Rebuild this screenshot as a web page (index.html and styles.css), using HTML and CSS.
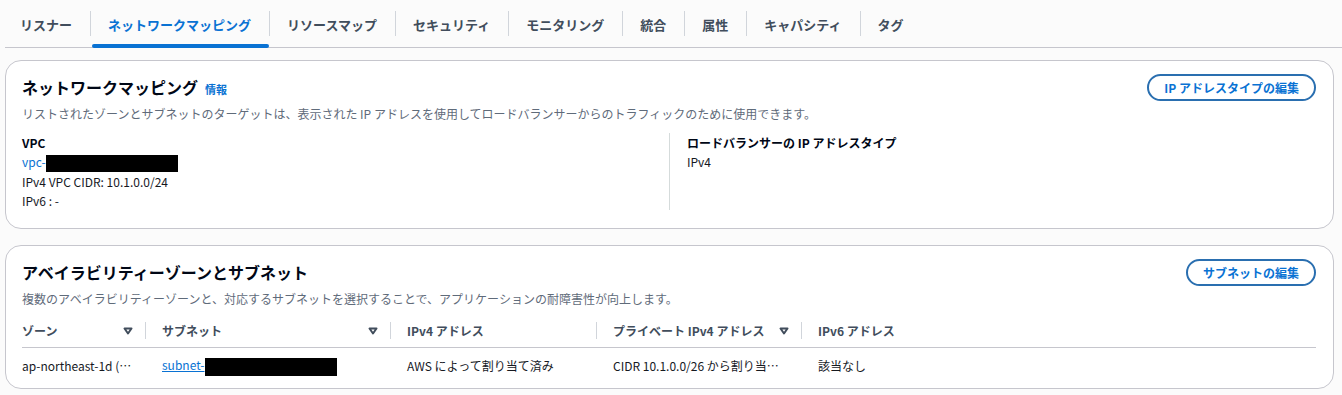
FILE: index.html
```html
<!DOCTYPE html>
<html lang="ja">
<head>
  <meta charset="utf-8">
  <title>ネットワークマッピング</title>
  <link rel="stylesheet" href="styles.css">
</head>
<body>
  <div class="page">
    <nav class="tabs">
      <a class="tab">リスナー</a>
      <span class="tab-sep"></span>
      <a class="tab active">ネットワークマッピング</a>
      <span class="tab-sep"></span>
      <a class="tab">リソースマップ</a>
      <span class="tab-sep"></span>
      <a class="tab">セキュリティ</a>
      <span class="tab-sep"></span>
      <a class="tab">モニタリング</a>
      <span class="tab-sep"></span>
      <a class="tab">統合</a>
      <span class="tab-sep"></span>
      <a class="tab">属性</a>
      <span class="tab-sep"></span>
      <a class="tab">キャパシティ</a>
      <span class="tab-sep"></span>
      <a class="tab">タグ</a>
    </nav>

    <section class="card">
      <div class="card-header">
        <div class="card-title">
          <h2>ネットワークマッピング</h2>
          <a class="info">情報</a>
        </div>
        <button class="btn">IP アドレスタイプの編集</button>
      </div>
      <p class="card-desc">リストされたゾーンとサブネットのターゲットは、表示された IP アドレスを使用してロードバランサーからのトラフィックのために使用できます。</p>
      <div class="columns">
        <div class="col">
          <div class="kv-label">VPC</div>
          <div><a class="link">vpc-</a><span class="redact redact-vpc"></span></div>
          <div>IPv4 VPC CIDR: 10.1.0.0/24</div>
          <div>IPv6 : -</div>
        </div>
        <div class="col">
          <div class="kv-label">ロードバランサーの IP アドレスタイプ</div>
          <div>IPv4</div>
        </div>
      </div>
    </section>

    <section class="card card-table">
      <div class="card-header">
        <div class="card-title">
          <h2>アベイラビリティーゾーンとサブネット</h2>
        </div>
        <button class="btn">サブネットの編集</button>
      </div>
      <p class="card-desc">複数のアベイラビリティーゾーンと、対応するサブネットを選択することで、アプリケーションの耐障害性が向上します。</p>
      <table class="table">
        <colgroup>
          <col class="c-zone">
          <col class="c-subnet">
          <col class="c-ipv4">
          <col class="c-private">
          <col>
        </colgroup>
        <thead>
          <tr>
            <th><div class="th-inner"><span class="th-label">ゾーン</span><svg class="sort" width="10" height="8" viewBox="0 0 10 8"><path d="M1.5 1.5H8.5L5 6.5Z"/></svg><span class="th-sep"></span></div></th>
            <th><div class="th-inner"><span class="th-label">サブネット</span><svg class="sort" width="10" height="8" viewBox="0 0 10 8"><path d="M1.5 1.5H8.5L5 6.5Z"/></svg><span class="th-sep"></span></div></th>
            <th><div class="th-inner"><span class="th-label">IPv4 アドレス</span><span class="th-sep"></span></div></th>
            <th><div class="th-inner"><span class="th-label">プライベート IPv4 アドレス</span><svg class="sort" width="10" height="8" viewBox="0 0 10 8"><path d="M1.5 1.5H8.5L5 6.5Z"/></svg><span class="th-sep"></span></div></th>
            <th><div class="th-inner"><span class="th-label">IPv6 アドレス</span></div></th>
          </tr>
        </thead>
        <tbody>
          <tr>
            <td>ap-northeast-1d (apne1-az2)</td>
            <td><a class="link underline">subnet-</a><span class="redact redact-subnet"></span></td>
            <td>AWS によって割り当て済み</td>
            <td>CIDR 10.1.0.0/26 から割り当て済み</td>
            <td>該当なし</td>
          </tr>
        </tbody>
      </table>
    </section>
  </div>
</body>
</html>
```

FILE: styles.css
```css
body {
  margin: 0;
  background-color: #fbfbfb;
  color: #16191f;
  font-family: "Noto Sans CJK JP", "Noto Sans", sans-serif;
  font-size: 12px;
}

.page {
  padding: 0 8px 0 5px;
}

/* tabs */
.tabs {
  display: flex;
  align-items: center;
  height: 47px;
  border-bottom: 1px solid #c6c6cd;
  margin-right: -8px;
}

.tab {
  position: relative;
  display: flex;
  align-items: center;
  height: 47px;
  padding: 1px 18px 0 17px;
  font-size: 13px;
  font-weight: bold;
  color: #414d5c;
  cursor: pointer;
}

.tab:first-child {
  padding-left: 15px;
}

.tab.active {
  color: #0972d3;
}

.tab.active::after {
  content: "";
  position: absolute;
  left: 1px;
  right: 0;
  bottom: 0;
  height: 4px;
  border-radius: 2px;
  background-color: #0972d3;
}

.tab-sep {
  width: 1px;
  height: 25px;
  background-color: #d1d5db;
}

/* cards */
.card {
  margin-top: 12px;
  padding: 13px 17px 18px 16px;
  background-color: #fff;
  border: 1px solid #c6c6cd;
  border-radius: 16px;
}

.card + .card {
  margin-top: 16px;
}

.card-table {
  padding-bottom: 5px;
}

.card-header {
  display: flex;
  align-items: center;
  justify-content: space-between;
}

.card-title {
  display: flex;
  align-items: baseline;
  gap: 7px;
  margin-top: -2px;
}

.card-title h2 {
  margin: 0;
  font-size: 16px;
  font-weight: bold;
  color: #000716;
  line-height: 22px;
}

.info {
  font-size: 11px;
  font-weight: bold;
  color: #0972d3;
}

.btn {
  height: 27px;
  padding: 0 15px;
  font-family: inherit;
  font-size: 12px;
  font-weight: bold;
  color: #0972d3;
  background-color: #fff;
  border: 2px solid #2a6fb0;
  border-radius: 14px;
  cursor: pointer;
}

.card-desc {
  margin: 5px 0 0;
  line-height: 16px;
  color: #5f6b7a;
}

/* key-value columns */
.columns {
  display: grid;
  grid-template-columns: 647px 1fr;
  margin-top: 11px;
}

.col {
  line-height: 19px;
}

.col + .col {
  padding-left: 17px;
  border-left: 1px solid #d5dbdb;
}

.kv-label {
  font-weight: bold;
  color: #000716;
}

.link {
  color: #0972d3;
  text-decoration: none;
}

.link.underline {
  text-decoration: underline;
}

.redact {
  display: inline-block;
  vertical-align: middle;
  background-color: #000;
}

.redact-vpc {
  width: 132px;
  height: 17px;
}

.redact-subnet {
  width: 132px;
  height: 18px;
}

/* table */
.table {
  width: 100%;
  margin-top: 7px;
  border-collapse: collapse;
  table-layout: fixed;
}

.c-zone {
  width: 124px;
}

.c-subnet {
  width: 245px;
}

.c-ipv4 {
  width: 206px;
}

.c-private {
  width: 205px;
}

.table th {
  height: 33px;
  padding: 0 0 0 16px;
  text-align: left;
  font-weight: bold;
  color: #414d5c;
  border-bottom: 1px solid #c6c6cd;
}

.table th:first-child,
.table td:first-child {
  padding-left: 0;
}

.table td:first-child {
  padding-right: 9px;
}

.th-inner {
  display: flex;
  align-items: center;
}

.th-label {
  flex: 1;
  white-space: nowrap;
}

.sort {
  margin-right: 12px;
}

.sort path {
  fill: none;
  stroke: #414d5c;
  stroke-width: 2;
  stroke-linejoin: round;
}

.th-sep {
  width: 1px;
  height: 17px;
  background-color: #d1d5db;
}

.table td {
  height: 35px;
  padding: 0 16px;
  white-space: nowrap;
  overflow: hidden;
  text-overflow: ellipsis;
}
```
